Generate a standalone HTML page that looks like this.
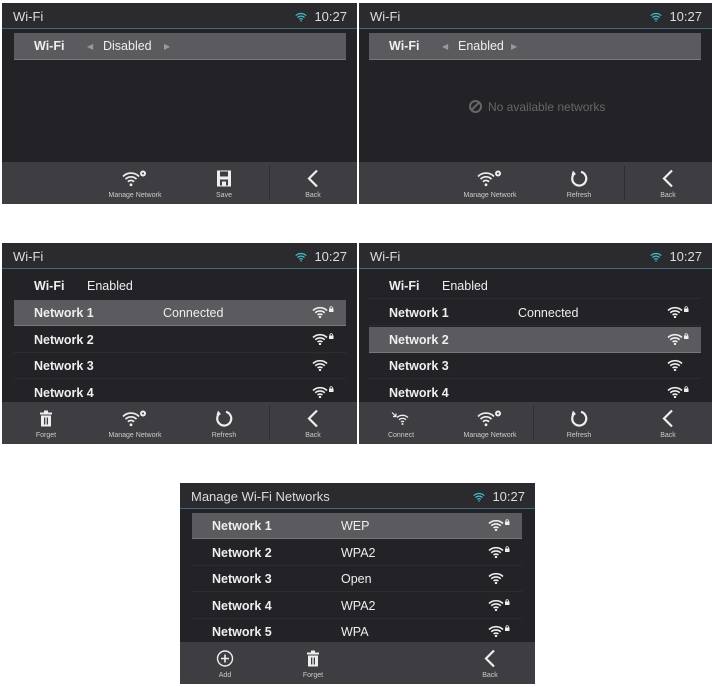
<!DOCTYPE html>
<html><head><meta charset="utf-8"><style>
*{margin:0;padding:0;box-sizing:border-box}
body{width:713px;height:687px;background:#fff;position:relative;overflow:hidden;font-family:"Liberation Sans",sans-serif;color:#eee}
.p{position:absolute;width:355px;height:201px;background:#232327;overflow:hidden}
.hd{position:absolute;left:0;top:0;right:0;height:26px;background:#2b2b2f;border-bottom:1px solid #3e6a7c;font-size:13px;color:#ddd}
.hd .t{position:absolute;left:11px;top:6px}
.hd .c{position:absolute;right:10px;top:6px}
.hd svg{position:absolute;right:49px;top:8px}
.bb{position:absolute;left:0;right:0;top:159px;bottom:0;background:#3d3d42}
.dv{position:absolute;top:4px;bottom:4px;width:1px;background:#2e2e32}
.bi{position:absolute;top:0;width:80px;margin-left:-40px;text-align:center;font-size:7px;color:#ccc}
.bi svg{display:block;margin:7px auto 0;height:19px}
.bi span{display:block;margin-top:4px}
.row{position:absolute;left:12px;width:332px;height:26px;font-size:12.5px;font-weight:bold;line-height:26px;border-bottom:1px solid #2d2d31}
.row.h{background:#5b5b5f;border-bottom:1px solid #777}
.row .n{position:absolute;left:20px}
.row .s{position:absolute;font-weight:normal}
.row svg{position:absolute;right:12px;top:6px}
</style></head><body>
<svg width="0" height="0" style="position:absolute">
<defs>
<symbol id="wf" viewBox="0 0 16 12"><path d="M1 4.5a10 10 0 0 1 14 0M3.3 6.8a6.8 6.8 0 0 1 9.4 0M5.6 9a3.5 3.5 0 0 1 4.8 0" stroke="#eee" stroke-width="1.6" fill="none"/><circle cx="8" cy="11" r="1.2" fill="#eee"/></symbol>
<symbol id="wfl" viewBox="0 0 22 12"><path d="M1 4.5a10 10 0 0 1 14 0M3.3 6.8a6.8 6.8 0 0 1 9.4 0M5.6 9a3.5 3.5 0 0 1 4.8 0" stroke="#eee" stroke-width="1.6" fill="none"/><circle cx="8" cy="11" r="1.2" fill="#eee"/><rect x="17" y="2.5" width="4.5" height="3.5" fill="#eee"/><path d="M18 2.8v-1a1.2 1.2 0 0 1 2.4 0v1" stroke="#eee" stroke-width="0.8" fill="none"/></symbol>
<symbol id="hw" viewBox="0 0 16 12"><path d="M2 5a8.5 8.5 0 0 1 12 0M4 7.2a5.6 5.6 0 0 1 8 0M6 9.3a2.8 2.8 0 0 1 4 0" stroke="#3bbfc9" stroke-width="1.4" fill="none"/><circle cx="8" cy="11" r="0.9" fill="#3bbfc9"/></symbol>
<symbol id="mn" viewBox="0 0 26 18"><path d="M1 7a11 11 0 0 1 16 0M3.5 9.7a7.5 7.5 0 0 1 11 0M6 12.3a4 4 0 0 1 6 0" stroke="#eee" stroke-width="1.7" fill="none"/><circle cx="9" cy="15.3" r="1.4" fill="#eee"/><circle cx="21" cy="4" r="3" fill="#eee"/><circle cx="21" cy="4" r="1" fill="#3d3d42"/></symbol>
<symbol id="bk" viewBox="0 0 14 18"><path d="M11 1L3 9l8 8" stroke="#eee" stroke-width="2.2" fill="none"/></symbol>
<symbol id="rf" viewBox="0 0 18 18"><path d="M5 3.5A7 7 0 1 0 11 2.3" stroke="#eee" stroke-width="2.2" fill="none"/><path d="M3 1l3 4-4.5 0.5z" fill="#eee"/></symbol>
<symbol id="tr" viewBox="0 0 14 18"><rect x="1" y="3" width="12" height="2" fill="#eee"/><rect x="5" y="1" width="4" height="2" fill="#eee"/><rect x="2" y="6" width="10" height="11" fill="#eee"/><rect x="5" y="8" width="1.3" height="7" fill="#3d3d42"/><rect x="7.7" y="8" width="1.3" height="7" fill="#3d3d42"/></symbol>
<symbol id="sv" viewBox="0 0 16 18"><rect x="1" y="1" width="14" height="16" fill="#eee"/><rect x="4" y="2" width="8" height="5" fill="#3d3d42"/><rect x="4" y="10" width="8" height="6" fill="#3d3d42"/><rect x="6" y="12" width="4" height="4" fill="#eee"/></symbol>
<symbol id="ad" viewBox="0 0 18 18"><circle cx="9" cy="9" r="7.5" stroke="#eee" stroke-width="1.4" fill="none"/><path d="M9 5v8M5 9h8" stroke="#eee" stroke-width="1.6"/></symbol>
<symbol id="cn" viewBox="0 0 20 14"><path d="M1 1l4 4M5 2v3H2" stroke="#eee" stroke-width="1.2" fill="none"/><path d="M6 6a8 8 0 0 1 11 0M8 8.3a5 5 0 0 1 7 0M10 10.5a2 2 0 0 1 3 0" stroke="#eee" stroke-width="1.3" fill="none"/><circle cx="11.5" cy="12.5" r="1" fill="#eee"/></symbol>
</defs></svg>

<!-- Panel 1 -->
<div class="p" style="left:2px;top:3px">
<div class="hd"><span class="t">Wi-Fi</span><svg width="14" height="11"><use href="#hw"/></svg><span class="c">10:27</span></div>
<div style="position:absolute;left:12px;top:30px;width:332px;height:27px;background:#5b5b5f;border-bottom:1px solid #777;font-size:12.5px;line-height:27px">
<b style="position:absolute;left:20px">Wi-Fi</b><span style="position:absolute;left:73px;font-size:8px;color:#999">◀</span><span style="position:absolute;left:89px">Disabled</span><span style="position:absolute;left:150px;font-size:8px;color:#999">▶</span></div>
<div class="bb"><div class="dv" style="left:267px"></div>
<div class="bi" style="left:133px"><svg width="26" height="18"><use href="#mn"/></svg><span>Manage Network</span></div>
<div class="bi" style="left:222px"><svg width="16" height="18"><use href="#sv"/></svg><span>Save</span></div>
<div class="bi" style="left:311px"><svg width="14" height="18"><use href="#bk"/></svg><span>Back</span></div></div>
</div>

<!-- Panel 2 -->
<div class="p" style="left:359px;top:3px;width:353px">
<div class="hd"><span class="t">Wi-Fi</span><svg width="14" height="11"><use href="#hw"/></svg><span class="c">10:27</span></div>
<div style="position:absolute;left:10px;top:30px;width:332px;height:27px;background:#5b5b5f;border-bottom:1px solid #777;font-size:12.5px;line-height:27px">
<b style="position:absolute;left:20px">Wi-Fi</b><span style="position:absolute;left:73px;font-size:8px;color:#999">◀</span><span style="position:absolute;left:89px">Enabled</span><span style="position:absolute;left:142px;font-size:8px;color:#999">▶</span></div>
<div style="position:absolute;left:110px;top:97px;font-size:12px;color:#666"><span style="display:inline-block;width:13px;height:13px;border:2px solid #666;border-radius:50%;vertical-align:-2px;margin-right:6px;position:relative"><i style="position:absolute;left:3px;top:-1px;width:2px;height:11px;background:#666;transform:rotate(45deg)"></i></span>No available networks</div>
<div class="bb"><div class="dv" style="left:265px"></div>
<div class="bi" style="left:131px"><svg width="26" height="18"><use href="#mn"/></svg><span>Manage Network</span></div>
<div class="bi" style="left:220px"><svg width="18" height="18"><use href="#rf"/></svg><span>Refresh</span></div>
<div class="bi" style="left:309px"><svg width="14" height="18"><use href="#bk"/></svg><span>Back</span></div></div>
</div>

<!-- Panel 3 -->
<div class="p" style="left:2px;top:243px">
<div class="hd"><span class="t">Wi-Fi</span><svg width="14" height="11"><use href="#hw"/></svg><span class="c">10:27</span></div>
<div class="row" style="top:30px;border-bottom:none"><span class="n">Wi-Fi</span><span class="s" style="left:73px">Enabled</span></div>
<div class="row h" style="top:57px"><span class="n">Network 1</span><span class="s" style="left:149px">Connected</span><svg width="22" height="12"><use href="#wfl"/></svg></div>
<div class="row" style="top:83.5px"><span class="n">Network 2</span><svg width="22" height="12"><use href="#wfl"/></svg></div>
<div class="row" style="top:110px"><span class="n">Network 3</span><svg width="22" height="12"><use href="#wf" width="16"/></svg></div>
<div class="row" style="top:136.5px"><span class="n">Network 4</span><svg width="22" height="12"><use href="#wfl"/></svg></div>
<div class="bb"><div class="dv" style="left:267px"></div>
<div class="bi" style="left:44px"><svg width="14" height="18"><use href="#tr"/></svg><span>Forget</span></div>
<div class="bi" style="left:133px"><svg width="26" height="18"><use href="#mn"/></svg><span>Manage Network</span></div>
<div class="bi" style="left:222px"><svg width="18" height="18"><use href="#rf"/></svg><span>Refresh</span></div>
<div class="bi" style="left:311px"><svg width="14" height="18"><use href="#bk"/></svg><span>Back</span></div></div>
</div>

<!-- Panel 4 -->
<div class="p" style="left:359px;top:243px;width:353px">
<div class="hd"><span class="t">Wi-Fi</span><svg width="14" height="11"><use href="#hw"/></svg><span class="c">10:27</span></div>
<div class="row" style="left:10px;top:30px"><span class="n">Wi-Fi</span><span class="s" style="left:73px">Enabled</span></div>
<div class="row" style="left:10px;top:57px"><span class="n">Network 1</span><span class="s" style="left:149px">Connected</span><svg width="22" height="12"><use href="#wfl"/></svg></div>
<div class="row h" style="left:10px;top:83.5px"><span class="n">Network 2</span><svg width="22" height="12"><use href="#wfl"/></svg></div>
<div class="row" style="left:10px;top:110px"><span class="n">Network 3</span><svg width="22" height="12"><use href="#wf" width="16"/></svg></div>
<div class="row" style="left:10px;top:136.5px"><span class="n">Network 4</span><svg width="22" height="12"><use href="#wfl"/></svg></div>
<div class="bb"><div class="dv" style="left:174px"></div>
<div class="bi" style="left:42px"><svg width="20" height="18"><use href="#cn"/></svg><span>Connect</span></div>
<div class="bi" style="left:131px"><svg width="26" height="18"><use href="#mn"/></svg><span>Manage Network</span></div>
<div class="bi" style="left:220px"><svg width="18" height="18"><use href="#rf"/></svg><span>Refresh</span></div>
<div class="bi" style="left:309px"><svg width="14" height="18"><use href="#bk"/></svg><span>Back</span></div></div>
</div>

<!-- Panel 5 -->
<div class="p" style="left:180px;top:483px">
<div class="hd"><span class="t">Manage Wi-Fi Networks</span><svg width="14" height="11"><use href="#hw"/></svg><span class="c">10:27</span></div>
<div class="row h" style="top:30px;width:330px"><span class="n">Network 1</span><span class="s" style="left:149px">WEP</span><svg width="22" height="12"><use href="#wfl"/></svg></div>
<div class="row" style="top:56.5px;width:330px"><span class="n">Network 2</span><span class="s" style="left:149px">WPA2</span><svg width="22" height="12"><use href="#wfl"/></svg></div>
<div class="row" style="top:83px;width:330px"><span class="n">Network 3</span><span class="s" style="left:149px">Open</span><svg width="22" height="12"><use href="#wf" width="16"/></svg></div>
<div class="row" style="top:109.5px;width:330px"><span class="n">Network 4</span><span class="s" style="left:149px">WPA2</span><svg width="22" height="12"><use href="#wfl"/></svg></div>
<div class="row" style="top:136px;width:330px"><span class="n">Network 5</span><span class="s" style="left:149px">WPA</span><svg width="22" height="12"><use href="#wfl"/></svg></div>
<div class="bb">
<div class="bi" style="left:45px"><svg width="18" height="18"><use href="#ad"/></svg><span>Add</span></div>
<div class="bi" style="left:133px"><svg width="14" height="18"><use href="#tr"/></svg><span>Forget</span></div>
<div class="bi" style="left:310px"><svg width="14" height="18"><use href="#bk"/></svg><span>Back</span></div></div>
</div>
</body></html>
